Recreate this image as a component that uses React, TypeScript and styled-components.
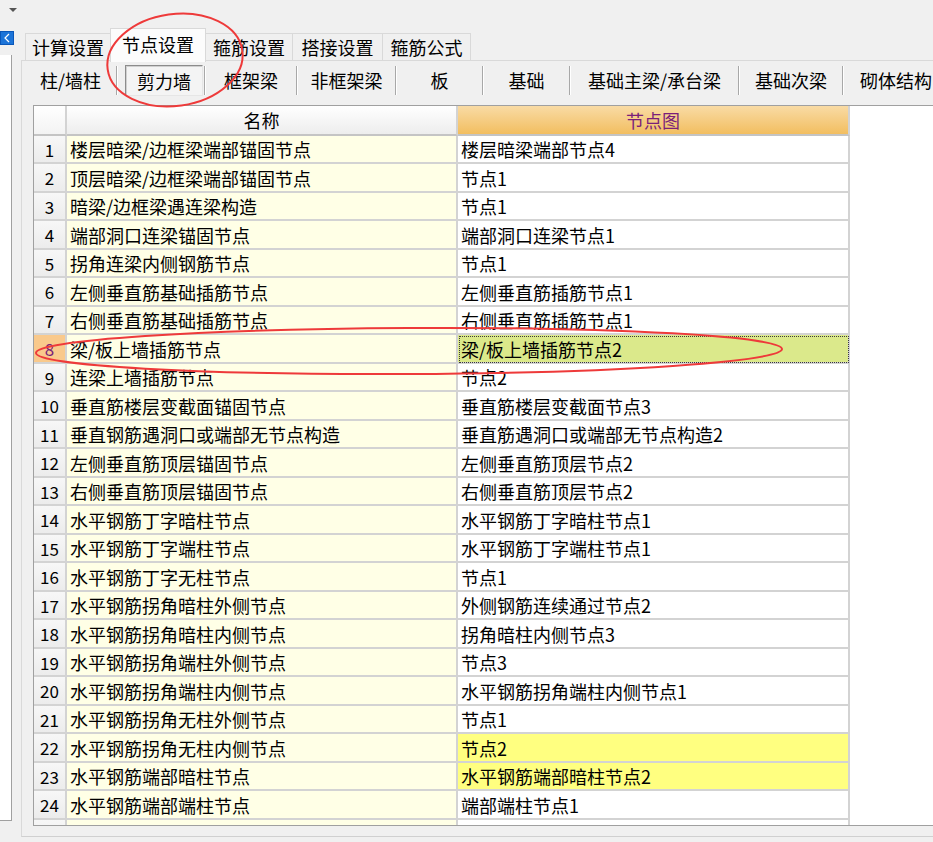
import React from "react";
import styled, { createGlobalStyle, css } from "styled-components";

const GlobalStyle = createGlobalStyle`
  html, body {
    margin: 0;
    padding: 0;
    background: #f0f0f0;
  }
  body {
    font-family: "Noto Sans CJK SC", "Noto Sans", sans-serif;
    font-size: 18px;
    color: #000;
    overflow: hidden;
  }
  * {
    box-sizing: border-box;
  }
`;

const Page = styled.div`
  position: relative;
  width: 933px;
  height: 842px;
  overflow: hidden;
  display: flex;
  flex-direction: column;
`;

const TopStrip = styled.div`
  height: 28px;
  flex: none;
  padding: 8px 0 0 9px;
`;

const DropArrow = styled.div`
  width: 0;
  height: 0;
  border-left: 4px solid transparent;
  border-right: 4px solid transparent;
  border-top: 4px solid #555;
`;

const Body = styled.div`
  flex: 1;
  display: flex;
  min-height: 0;
`;

const Side = styled.div`
  width: 21px;
  flex: none;
  display: flex;
  flex-direction: column;
`;

const SideButton = styled.div`
  margin-top: 3px;
  width: 14px;
  height: 14px;
  background: #1c74d8;
  border: 1px solid #0a57b9;
  display: flex;
  align-items: center;
  justify-content: center;
`;

const SideList = styled.div`
  margin-top: 10px;
  width: 12px;
  height: 766px;
  background: #fff;
  border-right: 1px solid #a0a0a0;
  border-bottom: 1px solid #a0a0a0;
`;

const Main = styled.div`
  flex: 1;
  min-width: 0;
  display: flex;
  flex-direction: column;
  padding-bottom: 5px;
`;

const TabStrip = styled.div`
  height: 32px;
  flex: none;
  display: flex;
  align-items: flex-end;
  padding-left: 4px;
  position: relative;
  z-index: 1;
`;

const Tab = styled.div<{ $active?: boolean; $w: number }>`
  width: ${(p) => p.$w}px;
  height: 27px;
  display: flex;
  align-items: center;
  justify-content: center;
  border: 1px solid #d9d9d9;
  border-bottom: none;
  margin-right: -1px;
  background: #f0f0f0;
  line-height: 1;
  white-space: nowrap;
  ${(p) =>
    p.$active &&
    css`
      height: 34px;
      margin-bottom: -2px;
      background: #fcfcfc;
      padding-bottom: 3px;
      position: relative;
      z-index: 2;
    `}
`;

const Pane = styled.div`
  flex: 1;
  min-height: 0;
  border-top: 1px solid #d9d9d9;
  border-left: 1px solid #d9d9d9;
  border-bottom: 1px solid #d0d0d0;
  padding: 1px 0 0 0;
  display: flex;
  flex-direction: column;
`;

const Toolbar = styled.div`
  height: 36px;
  flex: none;
  display: flex;
  align-items: center;
  padding-left: 3px;
  white-space: nowrap;
`;

const ToolButton = styled.div<{ $w: number; $pressed?: boolean }>`
  width: ${(p) => p.$w}px;
  height: 32px;
  flex: none;
  display: flex;
  align-items: center;
  justify-content: center;
  line-height: 1;
  ${(p) =>
    p.$pressed &&
    css`
      margin: 1px 1px 0 7px;
      height: 31px;
      background: #f4f4f4;
      border: 1px solid #8c8c8c;
      border-right-color: #e6e6e6;
      border-bottom-color: #e6e6e6;
      box-shadow: inset 1px 1px 0 #d0d0d0;
    `}
`;

const ToolSep = styled.div`
  width: 2px;
  height: 29px;
  flex: none;
  border-left: 1px solid #a8a8a8;
  border-right: 1px solid #fff;
`;

const Grid = styled.div`
  margin: 7px 0 0 11px;
  height: 721px;
  width: 1000px;
  flex: none;
  background: #fff;
  border-top: 1px solid #a0a0a0;
  border-left: 1px solid #a0a0a0;
  border-bottom: 1px solid #a0a0a0;
  overflow: hidden;
`;

const Row = styled.div<{ $h: number }>`
  display: flex;
  height: ${(p) => p.$h}px;
`;

const Cell = styled.div`
  height: 100%;
  display: flex;
  align-items: center;
  border-right: 2px solid #d3d3d3;
  border-bottom: 2px solid #d3d3d3;
  line-height: 1;
  white-space: nowrap;
  overflow: hidden;
`;

const NumCell = styled(Cell)<{ $active?: boolean }>`
  width: 33px;
  justify-content: center;
  font-size: 17px;
  background: linear-gradient(#f7f7f7, #ececec);
  ${(p) =>
    p.$active &&
    css`
      background: #f9c98c;
      color: #7a1f7a;
    `}
`;

const NameCell = styled(Cell)`
  width: 391px;
  padding-left: 3px;
  background: #ffffe6;
`;

type PicState = "plain" | "focus" | "mark";

const PicCell = styled(Cell)<{ $state: PicState }>`
  width: 392px;
  padding-left: 3px;
  background: #fff;
  ${(p) =>
    p.$state === "mark" &&
    css`
      background: #ffff80;
    `}
  ${(p) =>
    p.$state === "focus" &&
    css`
      background: #dbe98b;
      outline: 1px dotted #3a3a3a;
      outline-offset: -2px;
    `}
`;

const HeadNum = styled(Cell)`
  width: 33px;
  background: linear-gradient(#ffffff, #f3f3f3);
  border-bottom-color: #c4c4c4;
`;

const HeadName = styled(Cell)`
  width: 391px;
  justify-content: center;
  background: linear-gradient(#ffffff, #ededed);
  border-bottom-color: #c4c4c4;
`;

const HeadPic = styled(Cell)`
  width: 392px;
  justify-content: center;
  color: #7a1f7a;
  background: linear-gradient(#f9dba5, #f2be60);
  border-bottom-color: #c4c4c4;
`;

const Marks = styled.svg`
  position: absolute;
  left: 0;
  top: 0;
  pointer-events: none;
  z-index: 10;
`;

const tabs = [
  { label: "计算设置", w: 86 },
  { label: "节点设置", w: 96, active: true },
  { label: "箍筋设置", w: 88 },
  { label: "搭接设置", w: 91 },
  { label: "箍筋公式", w: 89 },
];

const tools = [
  { label: "柱/墙柱", w: 91 },
  { label: "剪力墙", w: 78, pressed: true },
  { label: "框架梁", w: 90 },
  { label: "非框架梁", w: 97 },
  { label: "板", w: 85 },
  { label: "基础", w: 85 },
  { label: "基础主梁/承台梁", w: 167 },
  { label: "基础次梁", w: 102 },
  { label: "砌体结构", w: 104 },
];

const rows: [string, string, PicState?][] = [
  ["楼层暗梁/边框梁端部锚固节点", "楼层暗梁端部节点4"],
  ["顶层暗梁/边框梁端部锚固节点", "节点1"],
  ["暗梁/边框梁遇连梁构造", "节点1"],
  ["端部洞口连梁锚固节点", "端部洞口连梁节点1"],
  ["拐角连梁内侧钢筋节点", "节点1"],
  ["左侧垂直筋基础插筋节点", "左侧垂直筋插筋节点1"],
  ["右侧垂直筋基础插筋节点", "右侧垂直筋插筋节点1"],
  ["梁/板上墙插筋节点", "梁/板上墙插筋节点2", "focus"],
  ["连梁上墙插筋节点", "节点2"],
  ["垂直筋楼层变截面锚固节点", "垂直筋楼层变截面节点3"],
  ["垂直钢筋遇洞口或端部无节点构造", "垂直筋遇洞口或端部无节点构造2"],
  ["左侧垂直筋顶层锚固节点", "左侧垂直筋顶层节点2"],
  ["右侧垂直筋顶层锚固节点", "右侧垂直筋顶层节点2"],
  ["水平钢筋丁字暗柱节点", "水平钢筋丁字暗柱节点1"],
  ["水平钢筋丁字端柱节点", "水平钢筋丁字端柱节点1"],
  ["水平钢筋丁字无柱节点", "节点1"],
  ["水平钢筋拐角暗柱外侧节点", "外侧钢筋连续通过节点2"],
  ["水平钢筋拐角暗柱内侧节点", "拐角暗柱内侧节点3"],
  ["水平钢筋拐角端柱外侧节点", "节点3"],
  ["水平钢筋拐角端柱内侧节点", "水平钢筋拐角端柱内侧节点1"],
  ["水平钢筋拐角无柱外侧节点", "节点1"],
  ["水平钢筋拐角无柱内侧节点", "节点2", "mark"],
  ["水平钢筋端部暗柱节点", "水平钢筋端部暗柱节点2", "mark"],
  ["水平钢筋端部端柱节点", "端部端柱节点1"],
  ["", ""],
];

const App: React.FC = () => {
  return (
    <Page>
      <GlobalStyle />
      <TopStrip>
        <DropArrow />
      </TopStrip>
      <Body>
        <Side>
          <SideButton>
            <svg width="8" height="10" viewBox="0 0 8 10">
              <path d="M6 1 L2 5 L6 9" fill="none" stroke="#fff" strokeWidth="1.2" />
            </svg>
          </SideButton>
          <SideList />
        </Side>
        <Main>
          <TabStrip>
            {tabs.map((t) => (
              <Tab key={t.label} $w={t.w} $active={t.active}>
                {t.label}
              </Tab>
            ))}
          </TabStrip>
          <Pane>
            <Toolbar>
              {tools.map((t, i) => (
                <React.Fragment key={t.label}>
                  {i > 0 && <ToolSep />}
                  <ToolButton $w={t.w} $pressed={t.pressed}>
                    {t.label}
                  </ToolButton>
                </React.Fragment>
              ))}
            </Toolbar>
            <Grid>
              <Row $h={30}>
                <HeadNum />
                <HeadName>名称</HeadName>
                <HeadPic>节点图</HeadPic>
              </Row>
              {rows.map(([name, pic, state], i) => (
                <Row key={i} $h={i % 2 === 0 ? 28 : 29}>
                  <NumCell $active={state === "focus"}>{name ? i + 1 : ""}</NumCell>
                  <NameCell>{name}</NameCell>
                  <PicCell $state={state ?? "plain"}>{pic}</PicCell>
                </Row>
              ))}
            </Grid>
          </Pane>
        </Main>
      </Body>
      <Marks width="933" height="842" viewBox="0 0 933 842">
        <ellipse
          cx="175"
          cy="60"
          rx="68"
          ry="46"
          transform="rotate(-8 175 60)"
          fill="none"
          stroke="#ee3a3a"
          strokeWidth="2"
        />
        <ellipse
          cx="409"
          cy="351"
          rx="373"
          ry="23"
          transform="rotate(-0.3 409 351)"
          fill="none"
          stroke="#ee3a3a"
          strokeWidth="2"
        />
      </Marks>
    </Page>
  );
};

export default App;
